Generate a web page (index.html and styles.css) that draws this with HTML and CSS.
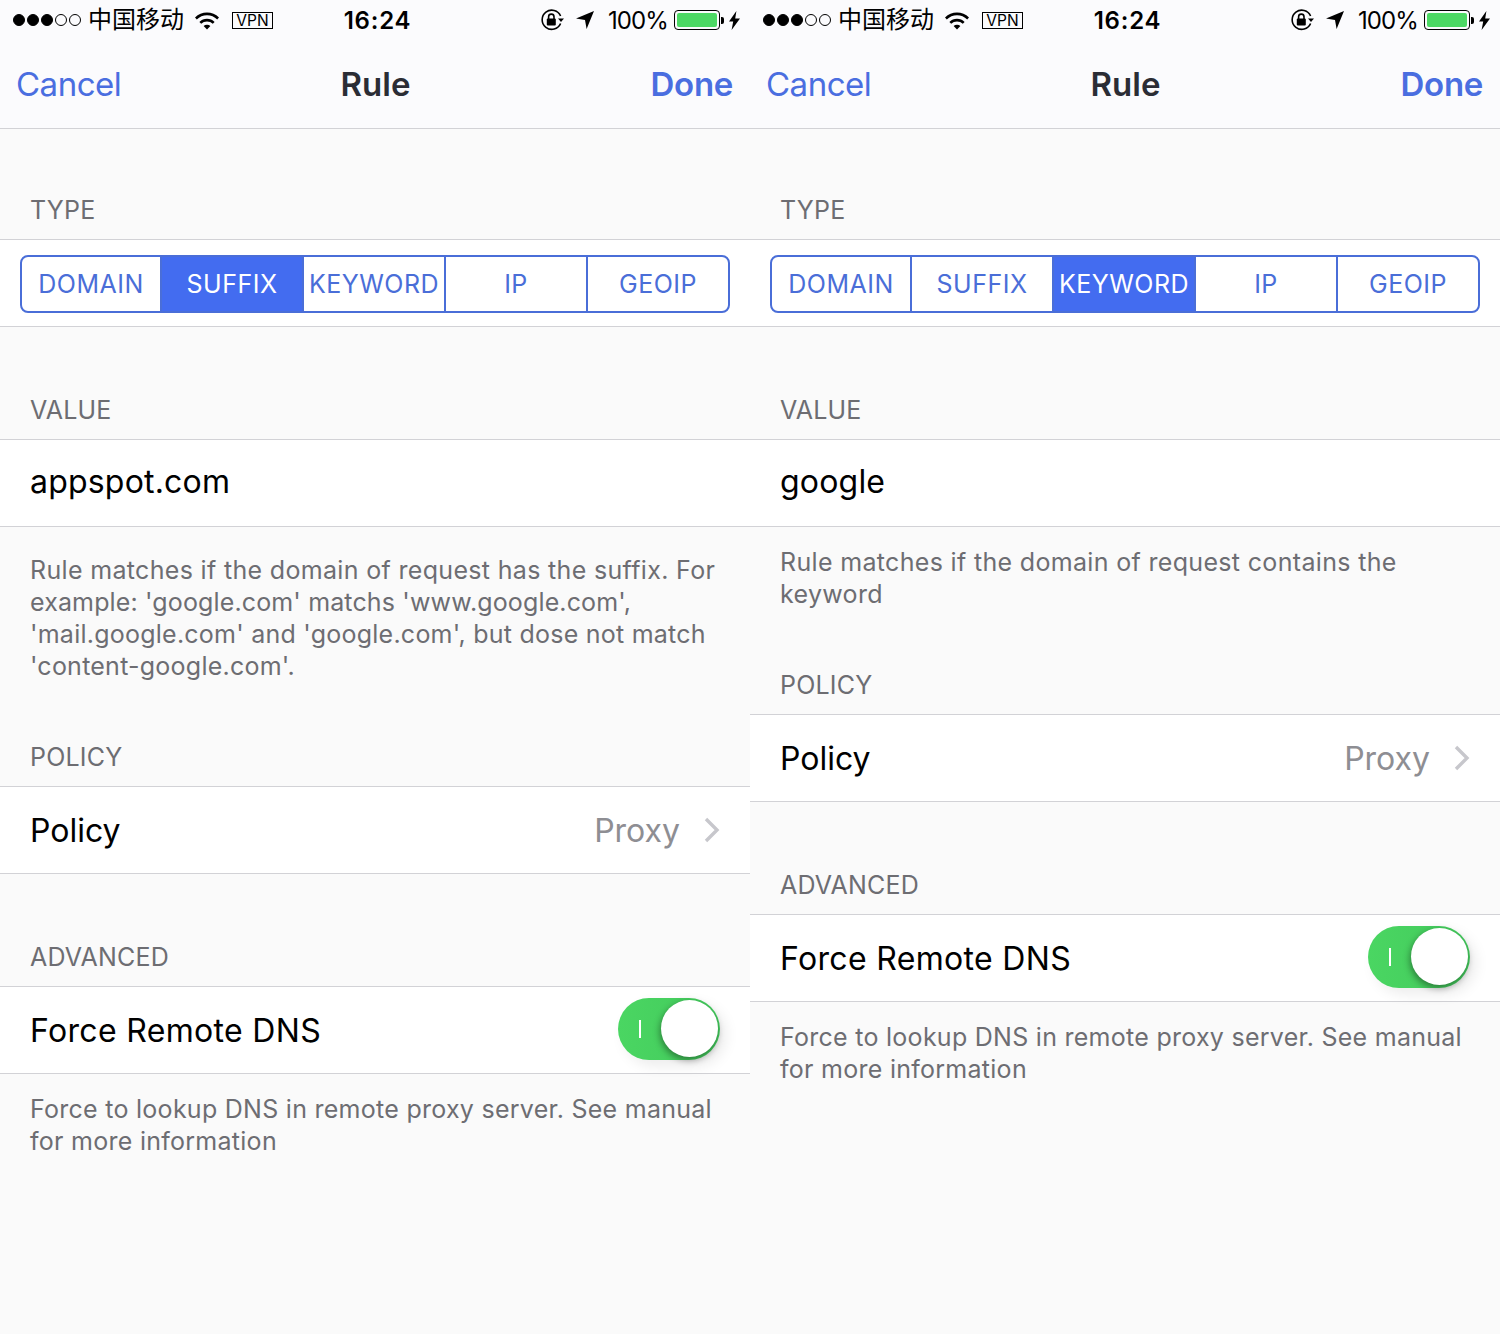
FILE: index.html
```html
<!DOCTYPE html>
<html lang="en">
<head>
    <meta charset="UTF-8">
    <title>Rule</title>
    <link rel="stylesheet" href="styles.css">
</head>
<body>
    <svg class="defs" width="0" height="0">
        <symbol id="wifi" viewBox="0 0 26 19">
            <path d="M1 6.5a17 17 0 0 1 24 0l-1.8 1.9a14.4 14.4 0 0 0-20.4 0z"/>
            <path d="M5.4 10.9a10.8 10.8 0 0 1 15.2 0l-1.8 1.9a8.2 8.2 0 0 0-11.6 0z"/>
            <path d="M9.6 15.1a4.9 4.9 0 0 1 6.8 0L13 18.6z"/>
        </symbol>
        <symbol id="lock" viewBox="0 0 24 22">
            <path d="M19.6 14.5A9.6 9.6 0 1 1 19.6 7" fill="none" stroke="#000" stroke-width="1.6"/>
            <path d="M17 9.5h6l-3 3.4z"/>
            <rect x="5.8" y="9.6" width="9" height="7" rx="1"/>
            <path d="M7.6 10V7.8a2.7 2.7 0 0 1 5.4 0V10" fill="none" stroke="#000" stroke-width="1.6"/>
        </symbol>
        <symbol id="arrow" viewBox="0 0 20 20">
            <path d="M19 1 11.6 19 10 10 1 8.6z"/>
        </symbol>
        <symbol id="bolt" viewBox="0 0 11 19">
            <path d="M7.4 0 0 10.6h4.2L2.6 19 11 7.6H6.2z"/>
        </symbol>
        <symbol id="chevron" viewBox="0 0 16 26">
            <path d="M2 2l11 11L2 24" fill="none" stroke="#c7c7cc" stroke-width="3.4"/>
        </symbol>
    </svg>

    <div class="screens">
        <div class="phone">
            <div class="status-bar">
                <div class="status-left">
                    <span class="signal"><i class="on"></i><i class="on"></i><i class="on"></i><i></i><i></i></span>
                    <span class="carrier">中国移动</span>
                    <svg class="icon-wifi"><use href="#wifi"/></svg>
                    <span class="vpn">VPN</span>
                </div>
                <div class="clock">16:24</div>
                <div class="status-right">
                    <svg class="icon-lock"><use href="#lock"/></svg>
                    <svg class="icon-arrow"><use href="#arrow"/></svg>
                    <span class="percent">100%</span>
                    <span class="battery"><span class="battery-fill"></span></span>
                    <span class="battery-cap"></span>
                    <svg class="icon-bolt"><use href="#bolt"/></svg>
                </div>
            </div>
            <div class="nav-bar">
                <span class="nav-btn">Cancel</span>
                <span class="nav-title">Rule</span>
                <span class="nav-btn done">Done</span>
            </div>

            <div class="section-label first">TYPE</div>
            <div class="row seg-row">
                <div class="segments">
                    <div class="seg">DOMAIN</div>
                    <div class="seg selected">SUFFIX</div>
                    <div class="seg">KEYWORD</div>
                    <div class="seg">IP</div>
                    <div class="seg">GEOIP</div>
                </div>
            </div>

            <div class="section-label">VALUE</div>
            <div class="row value-row">appspot.com</div>
            <p class="note note-long">Rule matches if the domain of request has the suffix. For<br><span class="quoted-tight">example: 'google.com' matchs 'www.google.com',</span><br><span class="quoted">'mail.google.com' and 'google.com', but dose not match</span><br><span class="quoted">'content-google.com'.</span></p>

            <div class="section-label tight">POLICY</div>
            <div class="row">
                <span>Policy</span>
                <span class="detail">Proxy</span>
                <svg class="chevron"><use href="#chevron"/></svg>
            </div>

            <div class="section-label">ADVANCED</div>
            <div class="row">
                <span class="force-dns">Force Remote DNS</span>
                <div class="switch"><span class="switch-mark"></span><span class="switch-knob"></span></div>
            </div>
            <p class="note note-dns">Force to lookup DNS in remote proxy server. See manual<br>for more information</p>
        </div>

        <div class="phone">
            <div class="status-bar">
                <div class="status-left">
                    <span class="signal"><i class="on"></i><i class="on"></i><i class="on"></i><i></i><i></i></span>
                    <span class="carrier">中国移动</span>
                    <svg class="icon-wifi"><use href="#wifi"/></svg>
                    <span class="vpn">VPN</span>
                </div>
                <div class="clock">16:24</div>
                <div class="status-right">
                    <svg class="icon-lock"><use href="#lock"/></svg>
                    <svg class="icon-arrow"><use href="#arrow"/></svg>
                    <span class="percent">100%</span>
                    <span class="battery"><span class="battery-fill"></span></span>
                    <span class="battery-cap"></span>
                    <svg class="icon-bolt"><use href="#bolt"/></svg>
                </div>
            </div>
            <div class="nav-bar">
                <span class="nav-btn">Cancel</span>
                <span class="nav-title">Rule</span>
                <span class="nav-btn done">Done</span>
            </div>

            <div class="section-label first">TYPE</div>
            <div class="row seg-row">
                <div class="segments">
                    <div class="seg">DOMAIN</div>
                    <div class="seg">SUFFIX</div>
                    <div class="seg selected">KEYWORD</div>
                    <div class="seg">IP</div>
                    <div class="seg">GEOIP</div>
                </div>
            </div>

            <div class="section-label">VALUE</div>
            <div class="row value-row">google</div>
            <p class="note note-short">Rule matches if the domain of request contains the<br>keyword</p>

            <div class="section-label tight">POLICY</div>
            <div class="row">
                <span>Policy</span>
                <span class="detail">Proxy</span>
                <svg class="chevron"><use href="#chevron"/></svg>
            </div>

            <div class="section-label">ADVANCED</div>
            <div class="row">
                <span class="force-dns">Force Remote DNS</span>
                <div class="switch"><span class="switch-mark"></span><span class="switch-knob"></span></div>
            </div>
            <p class="note note-dns">Force to lookup DNS in remote proxy server. See manual<br>for more information</p>
        </div>
    </div>
</body>
</html>
```

FILE: styles.css
```css
* {
    margin: 0;
    padding: 0;
    box-sizing: border-box;
}

body {
    font-family: Inter, "Noto Sans CJK SC", sans-serif;
    background-color: #fafafa;
    color: #000;
    overflow: hidden;
}

.defs {
    display: block;
    height: 0;
}

.screens {
    display: grid;
    grid-template-columns: 750px 750px;
    height: 1334px;
}

/* status bar */
.status-bar {
    height: 40px;
    display: grid;
    grid-template-columns: 1fr auto 1fr;
    align-items: center;
    background: #fbfbfd;
    font-size: 24px;
}

.status-left {
    display: flex;
    align-items: center;
    padding-left: 13px;
}

.signal {
    display: flex;
    gap: 2px;
}

.signal i {
    width: 12px;
    height: 12px;
    border-radius: 50%;
    border: 1px solid #000;
}

.signal i.on {
    background: #000;
}

.carrier {
    margin-left: 7px;
    font-size: 24px;
    line-height: 40px;
}

.icon-wifi {
    width: 26px;
    height: 19px;
    margin-left: 10px;
}

.vpn {
    width: 41px;
    height: 17px;
    margin-left: 12px;
    border: 1px solid #000;
    font-size: 15.5px;
    line-height: 15px;
    text-align: center;
}

.clock {
    font-size: 24px;
    font-weight: 600;
    letter-spacing: 0.8px;
    margin-left: 5px;
}

.status-right {
    display: flex;
    align-items: center;
    justify-content: flex-end;
    padding-right: 10px;
}

.icon-lock {
    width: 24px;
    height: 22px;
}

.icon-arrow {
    width: 20px;
    height: 20px;
    margin-left: 10px;
}

.percent {
    margin-left: 13px;
    font-size: 24px;
    letter-spacing: -0.9px;
}

.battery {
    width: 46px;
    height: 20px;
    margin-left: 6px;
    padding: 2px;
    border: 1px solid #000;
    border-radius: 4px;
}

.battery-fill {
    display: block;
    height: 100%;
    background: #4cd964;
    border-radius: 2px;
}

.battery-cap {
    width: 3px;
    height: 7px;
    margin-left: 1px;
    background: #000;
    border-radius: 0 2px 2px 0;
}

.icon-bolt {
    width: 11px;
    height: 19px;
    margin-left: 5px;
}

/* nav bar */
.nav-bar {
    height: 89px;
    padding: 0 17px 0 16px;
    display: grid;
    grid-template-columns: 1fr auto 1fr;
    align-items: center;
    background: #fbfbfd;
    border-bottom: 1px solid #d2d2d6;
}

.nav-btn {
    font-size: 33px;
    color: #4a6ee0;
    letter-spacing: -0.5px;
}

.nav-btn.done {
    font-weight: 600;
    text-align: right;
    letter-spacing: -0.3px;
}

.nav-title {
    font-size: 33px;
    font-weight: 600;
    color: #2b2d35;
    margin-left: 2px;
}

/* table sections */
.section-label {
    height: 113px;
    padding: 68px 30px 0;
    font-size: 25px;
    line-height: 30px;
    letter-spacing: 0.2px;
    color: #6d6d72;
    border-bottom: 1px solid #d2d2d6;
}

.section-label.first {
    height: 111px;
    padding-top: 66px;
}

.section-label.tight {
    height: auto;
    padding-top: 0;
    padding-bottom: 14px;
}

.row {
    height: 87px;
    padding: 0 30px;
    display: flex;
    align-items: center;
    background: #fff;
    font-size: 32px;
    border-bottom: 1px solid #d2d2d6;
}

.value-row {
    padding-bottom: 4px;
    letter-spacing: 0.2px;
}

.force-dns {
    letter-spacing: 0.33px;
}

.detail {
    margin-left: auto;
    color: #8e8e93;
}

.chevron {
    width: 16px;
    height: 26px;
    margin-left: 24px;
}

.note {
    padding: 19px 30px 0;
    font-size: 25px;
    line-height: 32px;
    letter-spacing: 0.33px;
    color: #6d6d72;
}

.note-long {
    height: 215px;
    padding-top: 27px;
}

.note-short {
    height: 143px;
}

.note-dns {
    letter-spacing: 0.27px;
}

.quoted {
    letter-spacing: 0.24px;
}

.quoted-tight {
    letter-spacing: 0.14px;
}

/* segmented control */
.seg-row {
    padding: 2px 20px 0;
}

.segments {
    width: 710px;
    height: 58px;
    display: grid;
    grid-template-columns: 140px 142px 142px 142px 140px;
    border: 2px solid #4a6ed8;
    border-radius: 8px;
    overflow: hidden;
}

.seg {
    display: flex;
    align-items: center;
    justify-content: center;
    font-size: 25px;
    letter-spacing: 0.5px;
    color: #4a6ed8;
    border-right: 2px solid #4a6ed8;
}

.seg:last-child {
    border-right: 0;
}

.seg.selected {
    background: #436cf0;
    color: #fff;
}

/* toggle */
.switch {
    position: relative;
    width: 102px;
    height: 62px;
    margin-left: auto;
    margin-top: -2px;
    background: linear-gradient(90deg, #4ad662, #43c95c);
    border-radius: 31px;
    box-shadow: 6px 6px 14px rgba(0, 0, 0, 0.08);
}

.switch-mark {
    position: absolute;
    left: 21px;
    top: 22px;
    width: 2px;
    height: 18px;
    background: #fff;
}

.switch-knob {
    position: absolute;
    right: 2px;
    top: 2px;
    width: 57px;
    height: 57px;
    background: #fff;
    border-radius: 50%;
    box-shadow: -1px 3px 7px rgba(0, 0, 0, 0.4);
}
```
